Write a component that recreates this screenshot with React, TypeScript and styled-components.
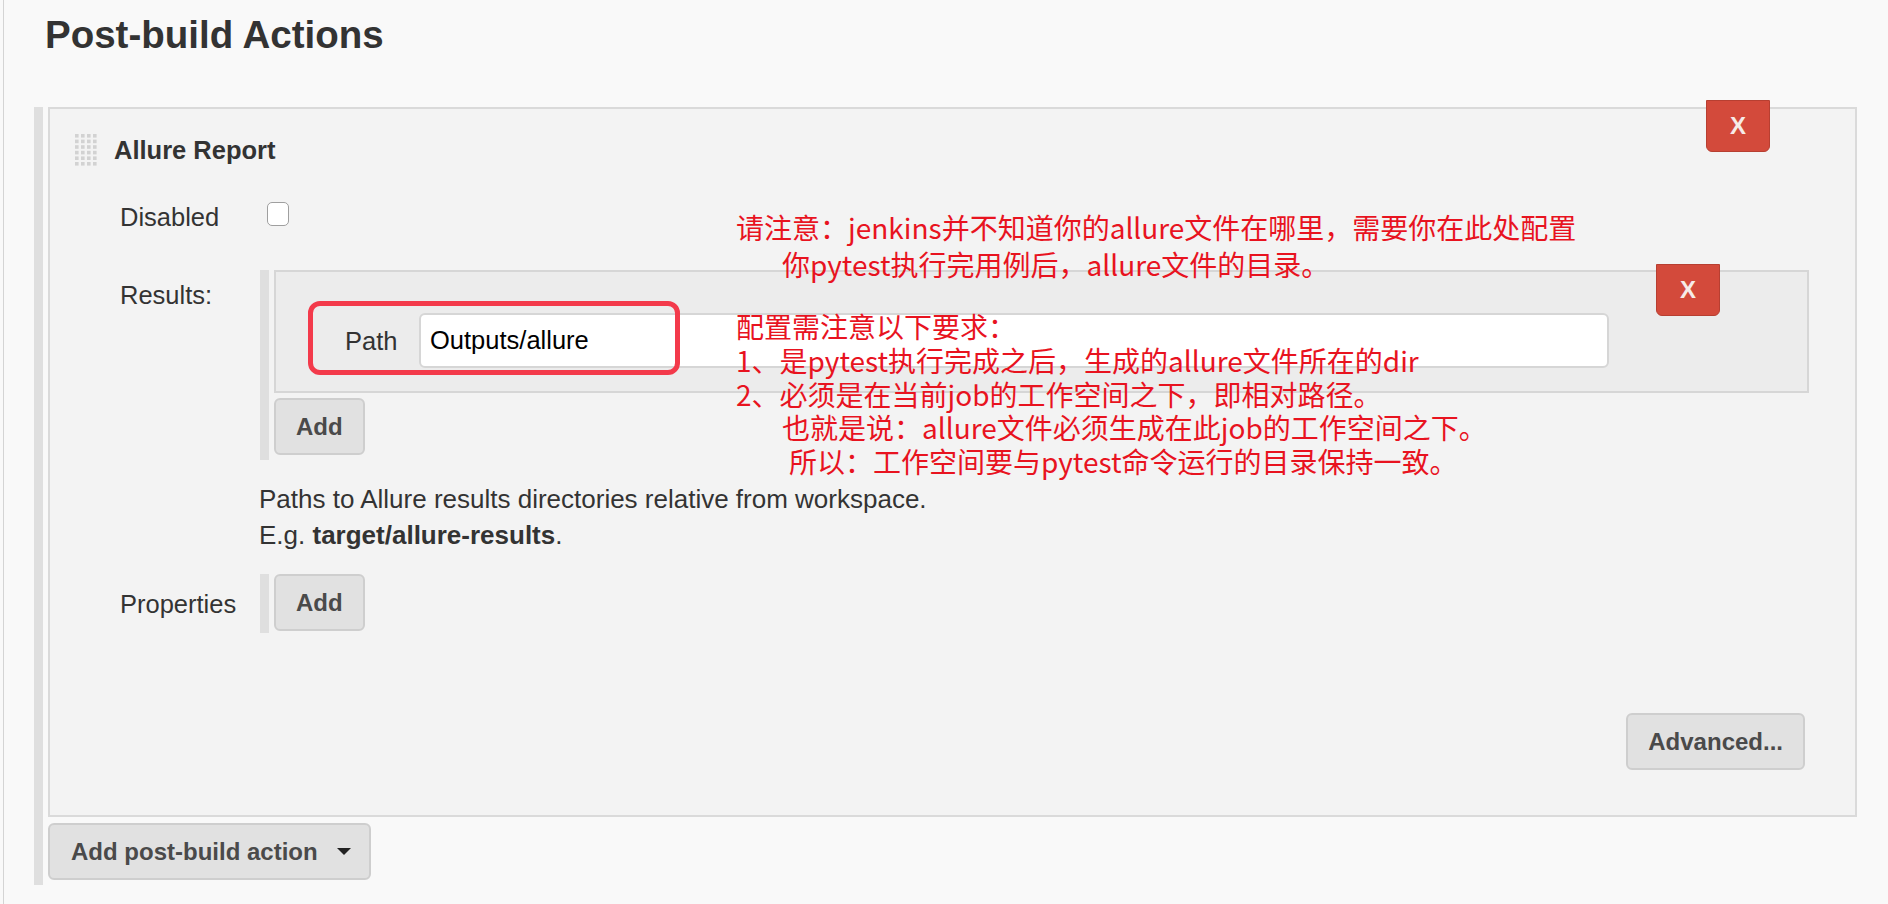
import React from "react";
import styled, { createGlobalStyle } from "styled-components";

const GlobalStyle = createGlobalStyle`
  html, body {
    margin: 0;
    padding: 0;
    background: #f9f9f9;
  }
  body {
    font-family: "Liberation Sans", Arial, sans-serif;
    color: #333;
  }
`;

const DragHandle = () => (
  <svg width="24" height="34" viewBox="0 0 24 34">
    {Array.from({ length: 6 }).map((_, r) =>
      Array.from({ length: 4 }).map((__, c) => (
        <rect
          key={`${r}-${c}`}
          x={1 + c * 6}
          y={1 + r * 5.6}
          width="3.6"
          height="3.6"
          fill="#d2d2d2"
        />
      ))
    )}
  </svg>
);

const Caret = () => (
  <svg width="14" height="8" viewBox="0 0 14 8">
    <path d="M0 0 L14 0 L7 7 Z" fill="#222" />
  </svg>
);

const App: React.FC = () => {
  return (
    <>
      <GlobalStyle />
      <Page>
        <Title>Post-build Actions</Title>

        <Section>
          <SideBar />
          <SectionColumn>
            <Box>
              <DeleteButton $top={-9} $right={85}>X</DeleteButton>
              <Header>
                <DragHandle />
                <HeaderText>Allure Report</HeaderText>
              </Header>

              <Fields>
                <Field $mt={33}>
                  <Label>Disabled</Label>
                  <Checkbox type="checkbox" />
                </Field>

                <Field $mt={36}>
                  <Label $mt={8}>Results:</Label>
                  <Nested>
                    <SideBar />
                    <NestedStack $pb={5}>
                      <RepeatBox>
                        <DeleteButton $top={-8} $right={87}>X</DeleteButton>
                        <PathRow>
                          <PathLabel>Path</PathLabel>
                          <PathInput defaultValue="Outputs/allure" />
                        </PathRow>
                      </RepeatBox>
                      <GrayButton $mt={5}>Add</GrayButton>
                    </NestedStack>
                  </Nested>
                </Field>

                <Help>
                  Paths to Allure results directories relative from workspace.
                  <br />
                  E.g. <b>target/allure-results</b>.
                </Help>

                <Field $mt={21} $center>
                  <Label>Properties</Label>
                  <Nested>
                    <SideBar />
                    <NestedStack $pb={2}>
                      <GrayButton>Add</GrayButton>
                    </NestedStack>
                  </Nested>
                </Field>
              </Fields>

              <Footer>
                <GrayButton>Advanced...</GrayButton>
              </Footer>
            </Box>

            <GrayButton $mt={6} $wide>
              Add post-build action
              <Caret />
            </GrayButton>
          </SectionColumn>
        </Section>

        {/* annotations drawn over the screenshot */}
        <RedFrame />
        <Note $top={209} $lh={37}>
          <NoteLine>请注意：jenkins并不知道你的allure文件在哪里，需要你在此处配置</NoteLine>
          <NoteLine $indent={46}>你pytest执行完用例后，allure文件的目录。</NoteLine>
        </Note>
        <Note $top={310} $lh={33.75}>
          <NoteLine>配置需注意以下要求：</NoteLine>
          <NoteLine>1、是pytest执行完成之后，生成的allure文件所在的dir</NoteLine>
          <NoteLine>2、必须是在当前job的工作空间之下，即相对路径。</NoteLine>
          <NoteLine $indent={46}>也就是说：allure文件必须生成在此job的工作空间之下。</NoteLine>
          <NoteLine $indent={53}>所以：工作空间要与pytest命令运行的目录保持一致。</NoteLine>
        </Note>
      </Page>
    </>
  );
};

export default App;

// ===== styled-components =====

const Page = styled.div`
  position: relative;
  box-sizing: border-box;
  margin-left: 3px;
  border-left: 1px solid #d4d4d4;
  min-height: 904px;
  padding: 12px 31px 0 30px;
`;

const Title = styled.h2`
  margin: 0 0 49px 11px;
  font-size: 38.5px;
  line-height: 46px;
  font-weight: 700;
  color: #333;
`;

const Section = styled.div`
  display: flex;
  align-items: stretch;
`;

const SideBar = styled.div`
  width: 9px;
  flex: 0 0 9px;
  background: #dfdfdf;
`;

const SectionColumn = styled.div`
  flex: 1;
  margin-left: 5px;
  padding-bottom: 5px;
  display: flex;
  flex-direction: column;
  align-items: flex-start;
`;

const Box = styled.div`
  position: relative;
  align-self: stretch;
  background: #f3f3f3;
  border: 2px solid #dadada;
  padding: 24px 0 45px 24px;
`;

const DeleteButton = styled.button<{ $top: number; $right: number }>`
  position: absolute;
  top: ${(p) => p.$top}px;
  right: ${(p) => p.$right}px;
  width: 64px;
  height: 52px;
  padding: 0;
  background: #d34a3b;
  border: 1px solid #b73f31;
  border-radius: 0 0 6px 6px;
  color: #f6ebe8;
  font-family: "Liberation Sans", Arial, sans-serif;
  font-size: 24px;
  font-weight: 700;
`;

const Header = styled.div`
  display: flex;
  align-items: center;
  gap: 16px;
  height: 34px;
`;

const HeaderText = styled.span`
  font-size: 25.5px;
  font-weight: 700;
  line-height: 34px;
  color: #333;
`;

const Fields = styled.div`
  margin: 0 46px 0 46px;
  display: flex;
  flex-direction: column;
`;

const Field = styled.div<{ $mt?: number; $center?: boolean }>`
  display: flex;
  align-items: ${(p) => (p.$center ? "center" : "flex-start")};
  margin-top: ${(p) => p.$mt ?? 0}px;
`;

const Label = styled.div<{ $mt?: number }>`
  width: 140px;
  flex: 0 0 140px;
  margin-top: ${(p) => p.$mt ?? 0}px;
  font-size: 25.5px;
  line-height: 34px;
  color: #333;
`;

const Checkbox = styled.input`
  appearance: none;
  margin: 2px 0 0 7px;
  width: 22px;
  height: 24px;
  background: #fff;
  border: 1px solid #9f9f9f;
  border-radius: 5px;
`;

const Nested = styled.div`
  flex: 1;
  display: flex;
  align-items: stretch;
`;

const NestedStack = styled.div<{ $pb: number }>`
  flex: 1;
  margin-left: 5px;
  padding-bottom: ${(p) => p.$pb}px;
  display: flex;
  flex-direction: column;
  align-items: flex-start;
`;

const RepeatBox = styled.div`
  position: relative;
  align-self: stretch;
  background: #ececec;
  border: 2px solid #d6d6d6;
  padding: 41px 198px 23px 69px;
`;

const PathRow = styled.div`
  display: flex;
  align-items: center;
`;

const PathLabel = styled.span`
  width: 74px;
  flex: 0 0 74px;
  font-size: 25.5px;
  line-height: 34px;
  color: #333;
`;

const PathInput = styled.input`
  flex: 1;
  box-sizing: border-box;
  height: 55px;
  padding: 0 9px;
  background: #fff;
  border: 2px solid #d6d6d6;
  border-radius: 6px;
  font-family: "Liberation Sans", Arial, sans-serif;
  font-size: 25.5px;
  color: #000;
  outline: none;
`;

const GrayButton = styled.button<{ $mt?: number; $wide?: boolean }>`
  display: inline-flex;
  align-items: center;
  gap: 19px;
  box-sizing: border-box;
  height: 57px;
  margin-top: ${(p) => p.$mt ?? 0}px;
  padding: ${(p) => (p.$wide ? "0 18px 0 21px" : "0 20px")};
  background: #e1e1e1;
  border: 2px solid #cecece;
  border-radius: 6px;
  color: #4a4a4a;
  font-family: "Liberation Sans", Arial, sans-serif;
  font-size: 24px;
  font-weight: 700;
`;

const Help = styled.div`
  margin: 21px 0 0 139px;
  font-size: 26px;
  line-height: 36px;
  color: #333;

  b {
    font-weight: 700;
  }
`;

const Footer = styled.div`
  display: flex;
  justify-content: flex-end;
  margin-top: 80px;
  padding-right: 50px;
`;

const RedFrame = styled.div`
  position: absolute;
  left: 304px;
  top: 301px;
  width: 372px;
  height: 74px;
  box-sizing: border-box;
  border: 5px solid #f33a4b;
  border-radius: 12px;
`;

const Note = styled.div<{ $top: number; $lh: number }>`
  position: absolute;
  left: 732px;
  top: ${(p) => p.$top}px;
  line-height: ${(p) => p.$lh}px;
  font-family: "Noto Sans CJK SC", "Noto Sans", sans-serif;
  font-size: 28px;
  color: #e8131f;
  white-space: nowrap;
`;

const NoteLine = styled.div<{ $indent?: number }>`
  padding-left: ${(p) => p.$indent ?? 0}px;
`;
